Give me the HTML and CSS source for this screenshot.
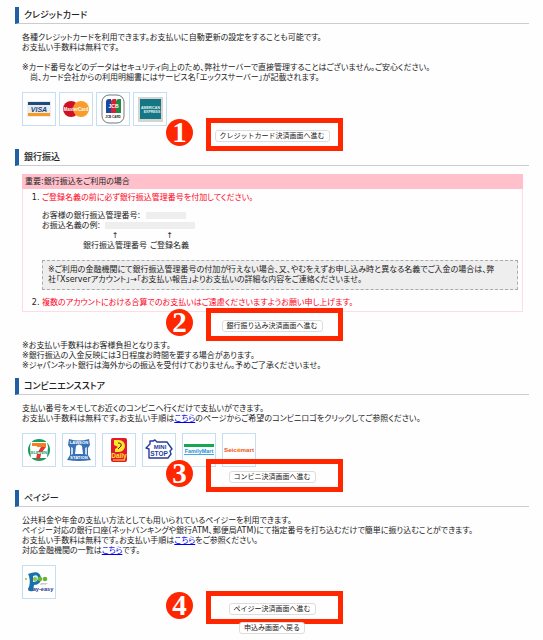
FILE: index.html
```html
<!DOCTYPE html>
<html lang="ja">
  <head>
    <meta charset="UTF-8" />
    <meta name="viewport" content="width=device-width, initial-scale=1.0" />
    <title>お支払い方法</title>
    <link rel="stylesheet" href="styles.css">
  </head>
  <body>
    <section>
      <h2>クレジットカード</h2>
      <div class="content">
        <p>各種クレジットカードを利用できます。お支払いに自動更新の設定をすることも可能です。<br>お支払い手数料は無料です。</p>
        <p class="note">※カード番号などのデータはセキュリティ向上のため、弊社サーバーで直接管理することはございません。ご安心ください。<br><span class="indent">尚、カード会社からの利用明細書にはサービス名「エックスサーバー」が記載されます。</span></p>
        <div class="logos cards">
          <svg class="logo" viewBox="0 0 32 32" role="img" aria-label="VISA">
            <rect x="4" y="8" width="24" height="16" fill="#e9edf2" />
            <rect x="5" y="9" width="22" height="3" fill="#214a7c" />
            <rect x="5" y="20" width="22" height="3" fill="#f59a23" />
            <text x="16" y="18.6" class="mark" font-size="7" font-style="italic" fill="#1d3f78">VISA</text>
          </svg>
          <svg class="logo" viewBox="0 0 32 32" role="img" aria-label="MasterCard">
            <circle cx="11" cy="16" r="8" fill="#cf1126" />
            <circle cx="21" cy="16" r="8" fill="#fb9b2a" />
            <text x="16" y="17.6" class="mark" font-size="4.5" fill="#fff">MasterCard</text>
          </svg>
          <svg class="logo" viewBox="0 0 32 32" role="img" aria-label="JCB">
            <rect x="5" y="2" width="22" height="28" rx="7" fill="#fff" stroke="#555" stroke-width="0.8" />
            <path d="M9 9a3 3 0 0 1 3-3h2v14h-5z" fill="#164a9c" />
            <path d="M14 9a3 3 0 0 1 3-3h2v14h-5z" fill="#d81f35" />
            <path d="M19 9a3 3 0 0 1 3-3h2v14h-5z" fill="#238a43" />
            <text x="16.5" y="15" class="mark" font-size="5" fill="#fff">JCB</text>
            <text x="16" y="25" class="mark" font-size="3" fill="#222">JCB CARD</text>
          </svg>
          <svg class="logo" viewBox="0 0 32 32" role="img" aria-label="AMERICAN EXPRESS">
            <rect x="4" y="4" width="25" height="25" fill="#d5d6d3" />
            <rect x="6" y="6" width="21" height="20" fill="#157783" />
            <text x="16.5" y="16" class="mark" font-size="3.5" fill="#e2f3f3">AMERICAN</text>
            <text x="18" y="20" class="mark" font-size="3.5" fill="#e2f3f3">EXPRESS</text>
          </svg>
        </div>
      </div>
      <div class="action">
        <button type="button">クレジットカード決済画面へ進む</button>
        <span class="frame"></span><span class="step">1</span>
      </div>
    </section>

    <section>
      <h2>銀行振込</h2>
      <div class="content">
        <div class="important">
          <h3>重要:銀行振込をご利用の場合</h3>
          <ol>
            <li>
              <span class="red">ご登録名義の前に必ず銀行振込管理番号を付加してください。</span>
              <div class="example">
                <div>お客様の銀行振込管理番号:<span class="masked"></span></div>
                <div>お振込名義の例: <span class="masked wide"></span></div>
                <div class="parts">
                  <span>↑<br>銀行振込管理番号</span>
                  <span>↑<br>ご登録名義</span>
                </div>
              </div>
              <div class="gray">※ご利用の金融機関にて銀行振込管理番号の付加が行えない場合、又、やむをえずお申し込み時と異なる名義でご入金の場合は、弊社「Xserverアカウント」→「お支払い報告」よりお支払いの詳細な内容をご連絡くださいませ。</div>
            </li>
            <li><span class="red">複数のアカウントにおける合算でのお支払いはご遠慮くださいますようお願い申し上げます。</span></li>
          </ol>
        </div>
      </div>
      <div class="action bank">
        <button type="button">銀行振り込み決済画面へ進む</button>
        <span class="frame"></span><span class="step">2</span>
      </div>
      <div class="content">
        <p>※お支払い手数料はお客様負担となります。<br>※銀行振込の入金反映には3日程度お時間を要する場合があります。<br>※ジャパンネット銀行は海外からの振込を受付けておりません。予めご了承くださいませ。</p>
      </div>
    </section>

    <section>
      <h2>コンビニエンスストア</h2>
      <div class="content">
        <p>支払い番号をメモしてお近くのコンビニへ行くだけで支払いができます。<br>お支払い手数料は無料です。お支払い手順は<a href="#">こちら</a>のページからご希望のコンビニロゴをクリックしてご参照ください。</p>
        <div class="logos">
          <svg class="logo" viewBox="0 0 32 32" role="img" aria-label="セブンイレブン">
            <circle cx="16" cy="16" r="11" fill="#159c62" />
            <path d="M8 8h16l1 5-1 11H8L7 13z" fill="#fff" />
            <path d="M9 9h14v4h-9v-1H9z" fill="#f28125" />
            <path d="M18 13h5l-4 5h-4z" fill="#e53232" />
            <path d="M14 20h4l-1 5h-4z" fill="#e53232" />
            <text x="16" y="19.6" class="mark" font-size="4" fill="#159c62">ELEVEN</text>
          </svg>
          <svg class="logo" viewBox="0 0 32 32" role="img" aria-label="ローソン">
            <path d="M6 5q10 3 20 0l1 6-2 3v7l3 5q-12 2-24 0l3-5v-7l-2-3z" fill="#3672b5" />
            <path d="M13 12q3-3 6 0l1 8h-8z" fill="#fff" />
            <path d="M8 13l2 1v6l-2 1zM24 13l-2 1v6l2 1z" fill="#c9dced" />
            <text x="16" y="10" class="mark" font-size="4.2" fill="#fff">LAWSON</text>
            <text x="16" y="25" class="mark" font-size="4.2" fill="#fff">STATION</text>
          </svg>
          <svg class="logo" viewBox="0 0 32 32" role="img" aria-label="デイリーヤマザキ">
            <rect x="8" y="4" width="16" height="24" rx="2" fill="#e3182c" />
            <path d="M11 6h5a6 6 0 0 1 0 12h-4v-3l3-2-4-2z" fill="#ffe62c" />
            <path d="M15 9q4 0 3 3l-3 3" fill="none" stroke="#2b2118" stroke-width="1" />
            <text x="16" y="23.5" class="mark" font-size="6.4" fill="#ffe62c">Daily</text>
            <path d="M10 26h12" stroke="#ffe62c" stroke-width="1" />
          </svg>
          <svg class="logo" viewBox="0 0 32 32" role="img" aria-label="ミニストップ">
            <path d="M3 14L7 10V7h3l2-1 2 2h10l5 7-2 2 1 3-3 4H6v-9z" fill="#fff" stroke="#263c9d" stroke-width="1.4" stroke-linejoin="round" />
            <text x="17" y="15" class="mark" font-size="6" fill="#263c9d">MINI</text>
            <text x="16" y="22" class="mark" font-size="6.5" fill="#263c9d">STOP</text>
          </svg>
          <svg class="logo" viewBox="0 0 32 32" role="img" aria-label="ファミリーマート">
            <rect x="1" y="10" width="30" height="3" fill="#17a651" />
            <rect x="1" y="20" width="30" height="1" fill="#42aae2" />
            <text x="16" y="18.7" class="mark" font-size="5.4" fill="#2090d8">FamilyMart</text>
          </svg>
          <svg class="logo" viewBox="0 0 32 32" role="img" aria-label="セイコーマート">
            <text x="16" y="18" class="mark" font-size="6.2" fill="#f05222">Seicomart</text>
            <circle cx="16" cy="16" r="1.4" fill="#f9ad35" />
          </svg>
        </div>
      </div>
      <div class="action">
        <button type="button">コンビニ決済画面へ進む</button>
        <span class="frame"></span><span class="step">3</span>
      </div>
    </section>

    <section>
      <h2>ペイジー</h2>
      <div class="content">
        <p>公共料金や年金の支払い方法としても用いられているペイジーを利用できます。<br>ペイジー対応の銀行口座(ネットバンキングや銀行ATM、郵便局ATM)にて指定番号を打ち込むだけで簡単に振り込むことができます。<br>お支払い手数料は無料です。お支払い手順は<a href="#">こちら</a>をご参照ください。<br>対応金融機関の一覧は<a href="#">こちら</a>です。</p>
        <div class="logos">
          <svg class="logo" viewBox="0 0 32 32" role="img" aria-label="Pay-easy">
            <path d="M5 8q12-5 13 4 0 7-7 7l-1 6q-5 1-5-2 3-5 1-13z" fill="#1871ad" />
            <path d="M10 10q5-2 5 2t-5 4z" fill="#d9f0f7" />
            <circle cx="3" cy="13" r="1" fill="#8bc832" />
            <circle cx="12" cy="13" r="2" fill="#8bc832" />
            <circle cx="17" cy="13" r="2.3" fill="#65b52e" />
            <circle cx="22" cy="13" r="2.3" fill="#65b52e" />
            <text x="21" y="18.5" class="mark" font-size="2" fill="#555">ペイジー</text>
            <text x="20" y="25" class="mark" font-size="5.6" fill="#22378c">ay-easy</text>
          </svg>
        </div>
      </div>
      <div class="action">
        <button type="button">ペイジー決済画面へ進む</button>
        <span class="frame"></span><span class="step">4</span>
      </div>
    </section>

    <div class="action back">
      <button type="button">申込み画面へ戻る</button>
    </div>
  </body>
</html>
```

FILE: styles.css
```css
body {
  margin: 0;
  padding: 7px 14px 5px 15px;
  background-color: #fefefe;
  color: #222;
  font-family: "DejaVu Sans", "Noto Sans CJK JP", sans-serif;
  font-size: 8px;
  line-height: 10px;
  font-feature-settings: "palt";
}

section {
  margin-bottom: 7px;
}

h2 {
  margin: 0 0 8px;
  padding-left: 5px;
  border-left: 4px solid #1f60a5;
  border-bottom: 1px solid #ccc;
  font-size: 9px;
  font-weight: 500;
  line-height: 16px;
}

p {
  margin: 0;
}

a {
  color: #0000ee;
}

.content {
  padding: 0 6px 0 7px;
}

.content > p:first-child {
  padding-top: 1px;
}

.note {
  margin-top: 10px;
}

.indent {
  padding-left: 8px;
}

.logos {
  display: flex;
  gap: 6px;
  margin-top: 9px;
}

.cards {
  gap: 3px;
}

.logo {
  width: 32px;
  height: 32px;
  border: 1px solid #c5def2;
  background-color: #fff;
}

.mark {
  font-family: "Liberation Sans", "Noto Sans CJK JP", sans-serif;
  font-weight: bold;
  text-anchor: middle;
}

.action {
  position: relative;
  display: flex;
  justify-content: center;
  margin-top: 4px;
}

.bank {
  margin: 8px 0;
}

.back {
  margin-top: 0;
}

button {
  height: 12px;
  padding: 0 4px;
  border: 1px solid #ddd;
  border-radius: 3px;
  background-color: #fff;
  color: #222;
  font-family: inherit;
  font-size: 7px;
  line-height: 10px;
  cursor: pointer;
}

button:hover {
  background-color: #f2f2f2;
}

/* red frame and number over each button */
.frame {
  position: absolute;
  top: -12px;
  left: calc(50% - 66px);
  box-sizing: border-box;
  width: 137px;
  height: 33px;
  border: 5px solid #ff2600;
  pointer-events: none;
}

.step {
  position: absolute;
  top: -11px;
  left: calc(50% - 106px);
  width: 27px;
  height: 27px;
  border-radius: 50%;
  background-color: #ff2600;
  color: #fff;
  font-family: "Liberation Serif", serif;
  font-size: 29px;
  font-weight: bold;
  line-height: 27px;
  text-align: center;
}

.important {
  border: 1px solid #ffdbe2;
  border-top: none;
}

.important h3 {
  margin: 0 -1px;
  padding-left: 3px;
  background-color: #ffc0cb;
  font-size: 8px;
  font-weight: normal;
  line-height: 15px;
}

ol {
  margin: 0;
  padding: 4px 4px 3px 19px;
}

.red {
  color: #ff0022;
}

.example {
  margin: 8px 0 9px;
}

.masked {
  display: inline-block;
  width: 40px;
  height: 7px;
  margin-left: 6px;
  background-color: #eee;
  vertical-align: middle;
}

.wide {
  width: 90px;
  margin-left: 2px;
}

.parts {
  display: flex;
  gap: 3px;
  padding-left: 41px;
  text-align: center;
}

.gray {
  margin-bottom: 8px;
  padding: 4px 18px 4px 5px;
  border: 1px dashed #aaa;
  background-color: #eee;
}
```
